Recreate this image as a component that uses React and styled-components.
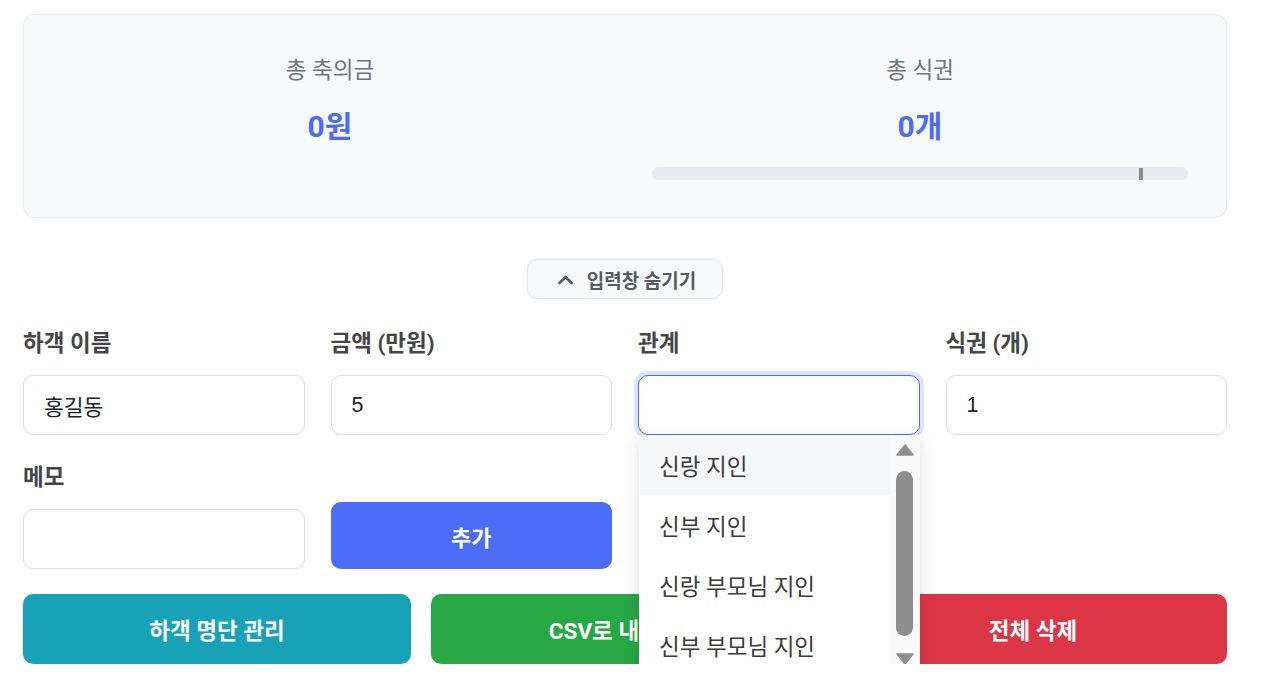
import styled, { createGlobalStyle } from 'styled-components';

const GlobalStyle = createGlobalStyle`
  html, body {
    margin: 0;
    background: #ffffff;
    font-family: Roboto, "Noto Sans CJK KR", sans-serif;
    color: #333;
  }
  * { box-sizing: border-box; }
`;

const Page = styled.div`
  width: 1204px;
  margin-left: 23px;
  padding-top: 14px;
`;

const SummaryCard = styled.section`
  display: grid;
  grid-template-columns: 1fr 1fr;
  column-gap: 54px;
  padding: 40px 38px 37px;
  background: #f8f9fa;
  border: 1px solid #e6e9ed;
  border-radius: 12px;
`;

const Stat = styled.div`
  display: flex;
  flex-direction: column;
  align-items: center;
`;

const StatLabel = styled.div`
  font-size: 22.5px;
  line-height: 30px;
  color: #6c757d;
`;

const StatValue = styled.div`
  margin-top: 22px;
  font-size: 30px;
  line-height: 40px;
  font-weight: 700;
  color: #4a6cf7;
`;

const Track = styled.div`
  position: relative;
  align-self: stretch;
  margin-top: 20px;
  height: 13px;
  border-radius: 7px;
  background: #e9ebee;
`;

const Marker = styled.span`
  position: absolute;
  top: 1px;
  width: 4px;
  height: 12px;
  background: #8c8c8c;
`;

const ToggleRow = styled.div`
  display: flex;
  justify-content: center;
  margin-top: 41px;
`;

const ToggleButton = styled.button`
  display: flex;
  align-items: center;
  gap: 14px;
  height: 40px;
  padding: 0 26px 0 30px;
  background: #f8f9fa;
  border: 1px solid #e3e6ea;
  border-radius: 10px;
  font-family: inherit;
  font-size: 19px;
  font-weight: 700;
  color: #555b63;
`;

const FormGrid = styled.div`
  display: grid;
  grid-template-columns: repeat(4, 1fr);
  column-gap: 26px;
  row-gap: 27px;
  margin-top: 29px;
  align-items: end;
`;

const Field = styled.div`
  position: relative;
  display: flex;
  flex-direction: column;
`;

const Label = styled.label`
  font-size: 22.5px;
  line-height: 30px;
  font-weight: 700;
  color: #454545;
  margin-bottom: 17px;
`;

const Input = styled.div`
  display: flex;
  align-items: center;
  height: 60px;
  padding: 0 20px;
  background: #fff;
  border: 1px solid ${p => (p.$focused ? '#4a6cf7' : '#dfe1e5')};
  border-radius: 10px;
  box-shadow: ${p => (p.$focused ? '0 0 0 4px rgba(74,108,247,0.18)' : 'none')};
  font-family: "Liberation Sans", "Noto Sans CJK KR", sans-serif;
  font-size: 21.5px;
  color: #222;
`;

const AddButton = styled.button`
  height: 67px;
  border: none;
  border-radius: 10px;
  background: #4a6cf7;
  color: #fff;
  font-family: inherit;
  font-size: 22px;
  font-weight: 700;
`;

const ActionRow = styled.div`
  display: grid;
  grid-template-columns: repeat(3, 1fr);
  gap: 20px;
  margin-top: 25px;
`;

const ActionButton = styled.button`
  height: 70px;
  border: none;
  border-radius: 10px;
  background: ${p => p.$bg};
  color: #fff;
  font-family: inherit;
  font-size: 22.5px;
  font-weight: 700;
`;

const Popup = styled.div`
  position: absolute;
  top: 107px;
  left: 1px;
  right: 0;
  height: 240px;
  display: flex;
  background: #fff;
  border-radius: 0 0 8px 8px;
  box-shadow: 0 6px 16px rgba(0, 0, 0, 0.14);
  overflow: hidden;
  z-index: 5;
`;

const OptionList = styled.ul`
  flex: 1;
  margin: 0;
  padding: 0;
  list-style: none;
`;

const Option = styled.li`
  height: 60px;
  display: flex;
  align-items: center;
  padding-left: 20px;
  font-size: 22.5px;
  color: #3a3a3a;
  background: ${p => (p.$active ? '#f6f7f9' : '#fff')};
`;

const ScrollBar = styled.div`
  width: 30px;
  display: flex;
  flex-direction: column;
  align-items: center;
  padding: 9px 0 10px;
  background: #fafafa;
`;

const Thumb = styled.div`
  width: 17px;
  flex: 1;
  margin: 14px 0 16px;
  border-radius: 9px;
  background: #8e8e8e;
`;

const ChevronUp = () => (
  <svg width="15" height="11" viewBox="0 0 15 11" fill="none">
    <path d="M1.5 9L7.5 3L13.5 9" stroke="#555b63" strokeWidth="2.6" strokeLinecap="round" strokeLinejoin="round" />
  </svg>
);

const Arrow = ({ down }) => (
  <svg width="18" height="13" viewBox="0 0 18 13" style={{ flexShrink: 0 }}>
    <path d={down ? 'M1 2H17L9 12Z' : 'M1 11H17L9 1Z'} fill="#8e8e8e" stroke="#8e8e8e" strokeWidth="1.5" strokeLinejoin="round" />
  </svg>
);

const options = ['신랑 지인', '신부 지인', '신랑 부모님 지인', '신부 부모님 지인'];

export default function App() {
  return (
    <Page>
      <GlobalStyle />
      <SummaryCard>
        <Stat>
          <StatLabel>총 축의금</StatLabel>
          <StatValue>0원</StatValue>
        </Stat>
        <Stat>
          <StatLabel>총 식권</StatLabel>
          <StatValue>0개</StatValue>
          <Track>
            <Marker style={{ left: `${(487 / 536) * 100}%` }} />
          </Track>
        </Stat>
      </SummaryCard>

      <ToggleRow>
        <ToggleButton>
          <ChevronUp />
          입력창 숨기기
        </ToggleButton>
      </ToggleRow>

      <FormGrid>
        <Field>
          <Label>하객 이름</Label>
          <Input>홍길동</Input>
        </Field>
        <Field>
          <Label>금액 (만원)</Label>
          <Input>5</Input>
        </Field>
        <Field>
          <Label>관계</Label>
          <Input $focused />
          <Popup>
            <OptionList>
              {options.map((o, i) => (
                <Option key={o} $active={i === 0}>{o}</Option>
              ))}
            </OptionList>
            <ScrollBar>
              <Arrow />
              <Thumb />
              <Arrow down />
            </ScrollBar>
          </Popup>
        </Field>
        <Field>
          <Label>식권 (개)</Label>
          <Input>1</Input>
        </Field>
        <Field>
          <Label>메모</Label>
          <Input />
        </Field>
        <AddButton>추가</AddButton>
      </FormGrid>

      <ActionRow>
        <ActionButton $bg="#17a2b8">하객 명단 관리</ActionButton>
        <ActionButton $bg="#28a745">CSV로 내보내기</ActionButton>
        <ActionButton $bg="#dc3545">전체 삭제</ActionButton>
      </ActionRow>
    </Page>
  );
}
